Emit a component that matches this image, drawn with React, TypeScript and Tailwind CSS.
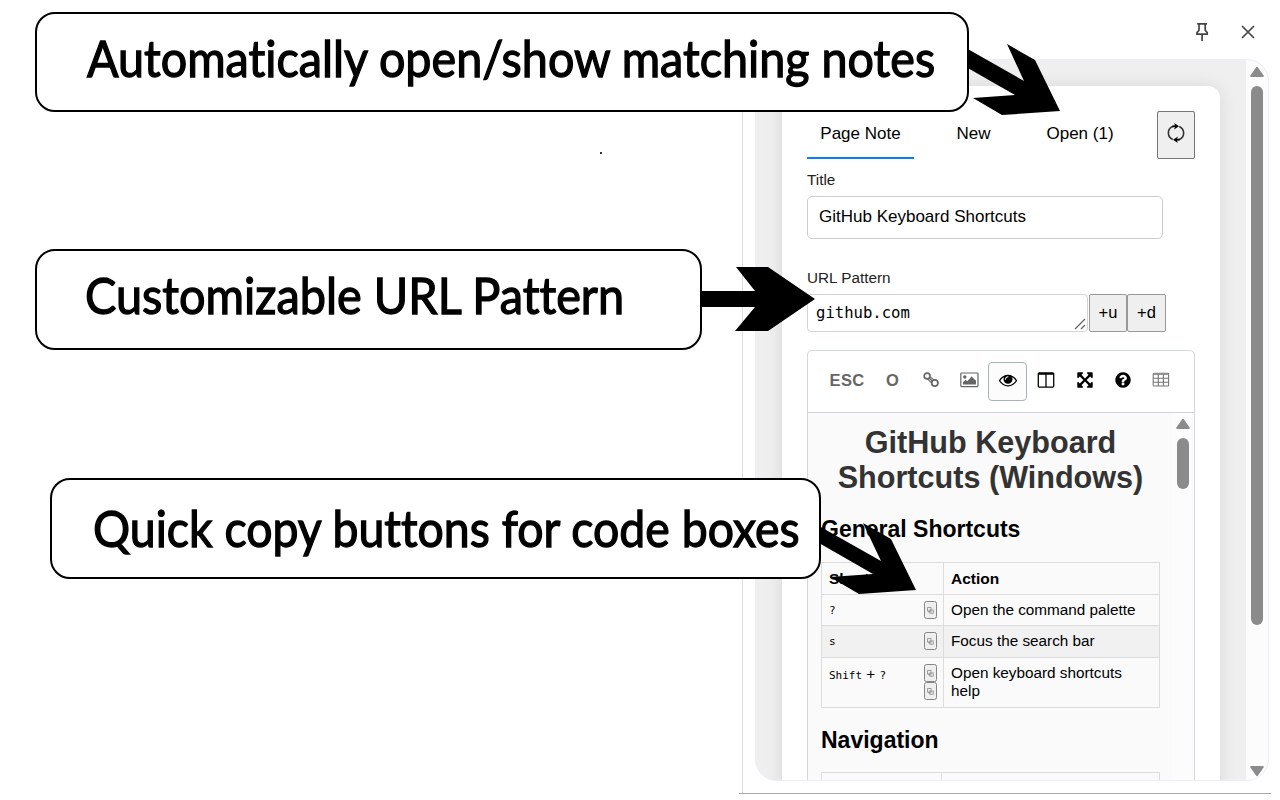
import type { ReactNode } from "react";

const EYE =
  "M1664 960q-152-236-381-353 61 104 61 225 0 185-131.5 316.5t-316.5 131.5-316.5-131.5-131.5-316.5q0-121 61-225-229 117-381 353 133 205 333.5 326.5t434.5 121.5 434.5-121.5 333.5-326.5zm-720-384q0-20-14-34t-34-14q-125 0-214.5 89.5t-89.5 214.5q0 20 14 34t34 14 34-14 14-34q0-86 61-147t147-61q20 0 34-14t14-34zm848 384q0 34-20 69-140 230-376.5 368.5t-499.5 138.5-499.5-139-376.5-368q-20-35-20-69t20-69q140-229 376.5-368t499.5-139 499.5 139 376.5 368q20 35 20 69z";
const COLUMNS =
  "M224 1536h608v-1152h-640v1120q0 13 9.5 22.5t22.5 9.5zm1376-32v-1120h-640v1152h608q13 0 22.5-9.5t9.5-22.5zm128-1216v1216q0 66-47 113t-113 47h-1344q-66 0-113-47t-47-113v-1216q0-66 47-113t113-47h1344q66 0 113 47t47 113z";
const ARROWS =
  "M1411 541l-355 355 355 355 144-144q29-31 70-14 39 17 39 59v448q0 26-19 45t-45 19h-448q-42 0-59-40-17-39 14-69l144-144-355-355-355 355 144 144q31 30 14 69-17 40-59 40h-448q-26 0-45-19t-19-45v-448q0-42 40-59 39-17 69 14l144 144 355-355-355-355-144 144q-19 19-45 19-12 0-24-5-40-17-40-59v-448q0-26 19-45t45-19h448q42 0 59 40 17 39-14 69l-144 144 355 355 355-355-144-144q-31-30-14-69 17-40 59-40h448q26 0 45 19t19 45v448q0 42-39 59-13 5-25 5-26 0-45-19z";
const QUESTION =
  "M1024 1376v-192q0-14-9-23t-23-9h-192q-14 0-23 9t-9 23v192q0 14 9 23t23 9h192q14 0 23-9t9-23zm256-672q0-88-55.5-163t-138.5-116-170-41q-243 0-371 213-15 24 8 42l132 100q7 6 19 6 16 0 25-12 53-68 86-92 34-24 86-24 48 0 85.5 26t37.5 59q0 38-20 61t-68 45q-63 28-115.5 86.5t-52.5 125.5v36q0 14 9 23t23 9h192q14 0 23-9t9-23q0-19 21.5-49.5t54.5-49.5q32-18 49-28.5t46-35 44.5-48 28-60.5 12.5-81zm384 192q0 209-103 385.5t-279.5 279.5-385.5 103-385.5-103-279.5-279.5-103-385.5 103-385.5 279.5-279.5 385.5-103 385.5 103 279.5 279.5 103 385.5z";

function Glyph({ d }: { d: string }) {
  return (
    <svg className="h-[18px] w-[18px]" viewBox="0 0 1792 1792" fill="currentColor">
      <path d={d} />
    </svg>
  );
}

function Tool({ children, active }: { children: ReactNode; active?: boolean }) {
  return (
    <span
      className={
        active
          ? "flex h-[39px] w-[39px] shrink-0 items-center justify-center rounded-[4px] border border-[#a5b4b4] bg-[#fcfcfc] pb-[3px]"
          : "flex h-[39px] w-[38.2px] shrink-0 items-center justify-center pb-[3px]"
      }
    >
      {children}
    </span>
  );
}

function CopyButton() {
  return (
    <span className="flex h-[18px] w-[13px] items-center justify-center rounded-[2.5px] border border-[#858585] bg-[#efefef]">
      <svg className="mt-px h-[7px] w-[7px]" viewBox="0 0 7 7" fill="none" stroke="#888" strokeWidth="0.8">
        <rect x="0.6" y="0.6" width="3.4" height="3.4" />
        <rect x="3" y="3" width="3.2" height="3.2" />
        <path d="M1.8 4v1.2h1.2" />
      </svg>
    </span>
  );
}

function Row({ keys, copies, action, className }: { keys: ReactNode; copies: number; action: ReactNode; className: string }) {
  return (
    <div className={`flex border-b border-[#dcdcdc] ${className}`}>
      <div className="flex w-[122px] shrink-0 justify-between border-r border-[#dcdcdc] pl-[7px] pr-[6px] pt-[6px]">
        <span className="pt-px font-['DejaVu_Sans_Mono',monospace] text-[11px] leading-[18px]">{keys}</span>
        <span className="flex flex-col">
          {Array.from({ length: copies }, (_, i) => (
            <CopyButton key={i} />
          ))}
        </span>
      </div>
      <div className="whitespace-nowrap pl-[7px] pt-[6px] text-[15.3px] leading-[18px]">{action}</div>
    </div>
  );
}

function Triangle({ down }: { down?: boolean }) {
  return (
    <svg className="h-[12px] w-[14px]" viewBox="0 0 14 12" fill="#8b8b8b" stroke="#8b8b8b" strokeWidth="2" strokeLinejoin="round">
      <path d={down ? "M1.2 2H12.8L7 10.3Z" : "M1.2 10H12.8L7 1.7Z"} />
    </svg>
  );
}

function SidePanel() {
  return (
    <div className="ml-[742px] flex h-[794px] w-[529px] flex-col bg-white">
      <div className="flex h-[59px] shrink-0 items-center pb-px pl-[452px] pt-[6px] text-[#444]">
        <svg className="h-[20px] w-[16px]" viewBox="0 0 16 20" fill="none" stroke="currentColor" strokeWidth="1.7">
          <path d="M3.2 1.9H13M5 2V8.3L3 10.6V12.2H13.2V10.6L11.2 8.3V2M8.1 12.5V19" />
        </svg>
        <svg className="ml-[30px] h-[16px] w-[16px]" viewBox="0 0 16 16" fill="none" stroke="currentColor" strokeWidth="1.7">
          <path d="M2 2L14 14M14 2L2 14" />
        </svg>
      </div>
      <div className="h-[735px] shrink-0 border-l border-[#dedee2] pl-[12px]">
        <div className="flex h-[722px] w-[514px] overflow-hidden rounded-[22px] border border-[#e9eefa] bg-[#efefef]">
          <div className="w-[490px] shrink-0 pl-[26px] pt-[26px]">
            <div className="h-[760px] w-[438px] rounded-[12px] bg-white px-[25px] pt-[26px] shadow-[0_0_18px_rgba(0,0,0,0.09)]">
              <div className="flex h-[47px] text-[17px]">
                <div className="flex w-[107px] items-center justify-center border-b-2 border-[#0a7cff] pb-[2px]">Page Note</div>
                <div className="ml-[30px] flex w-[59px] items-center justify-center pb-[4px]">New</div>
                <div className="ml-[43px] flex w-[68px] items-center justify-center whitespace-nowrap pb-[4px]">Open (1)</div>
                <div className="-mt-px ml-[43px] flex h-[48px] w-[38px] items-center justify-center rounded-[2px] border border-[#777] bg-[#efefef] pb-[5px]">
                  <svg className="h-[20px] w-[18px]" viewBox="0 0 18 20">
                    <path d="M5.2 3.6A7.6 7.2 0 0 0 5.8 16.4M12.8 16.4A7.6 7.2 0 0 0 12.2 3.6" fill="none" stroke="#333" strokeWidth="1.6" />
                    <path d="M7.2 0L12 3.2L7 6.4L8 4L5 4.4L5.2 2.6L8 2.2ZM10.8 20L6 16.8L11 13.6L10 16L13 15.6L12.8 17.4L10 17.8Z" fill="#000" />
                  </svg>
                </div>
              </div>
              <div className="mt-[11px] h-[26px] text-[15.3px] leading-[20px] text-[#222]">Title</div>
              <div className="flex h-[43px] w-[356px] items-center rounded-[5px] border border-[#ccc] pb-[1px] pl-[11px] text-[17px]">GitHub Keyboard Shortcuts</div>
              <div className="mt-[29px] h-[26px] text-[15.3px] leading-[20px] text-[#222]">URL Pattern</div>
              <div className="flex h-[38px]">
                <div className="flex h-[38px] w-[281px] items-end justify-between rounded-[4px] border border-[#d4d4d4] pl-[8px]">
                  <span className="self-center pt-px font-['DejaVu_Sans_Mono',monospace] text-[15.6px]">github.com</span>
                  <svg className="mb-px mr-px h-[12px] w-[12px]" viewBox="0 0 12 12" stroke="#666" strokeWidth="1.3">
                    <path d="M1 11L11 1M7 11L11 7" />
                  </svg>
                </div>
                <div className="ml-[1px] flex h-[38px] w-[38px] items-center justify-center rounded-[2px] border border-[#999] bg-[#efefef] pb-px text-[16.5px]">+u</div>
                <div className="flex h-[38px] w-[39px] items-center justify-center rounded-[2px] border border-[#999] bg-[#efefef] pb-px text-[16.5px]">+d</div>
              </div>
              <div className="mt-[18px] h-[460px] w-[388px] rounded-t-[5px] border border-[#d3d7de]">
                <div className="flex h-[62px] items-center border-b border-[#cdd2dc] pl-[13px]">
                  <span className="flex w-[52px] justify-center pb-[2px] text-[16.5px] font-bold tracking-[0.3px] text-[#666]">ESC</span>
                  <span className="flex w-[39px] justify-center pb-[2px] text-[16.5px] font-bold text-[#666]">O</span>
                  <Tool>
                    <svg className="h-[16px] w-[16px]" viewBox="0 0 16 16" fill="none" stroke="#666" strokeWidth="1.7">
                      <circle cx="4.1" cy="4" r="2.9" />
                      <circle cx="11.8" cy="11" r="3.1" />
                      <path d="M4.6 7.2L8.8 11.2M7.2 4.8L11.2 8.2" strokeWidth="1.1" />
                      <path d="M6 6L9.6 9.2" strokeWidth="1.3" />
                    </svg>
                  </Tool>
                  <Tool>
                    <svg className="h-[16px] w-[19px]" viewBox="0 0 19 16" fill="#666">
                      <rect x="0.8" y="1" width="17.2" height="13.6" rx="0.8" fill="none" stroke="#666" strokeWidth="1.2" />
                      <circle cx="4.8" cy="5" r="1.7" />
                      <path d="M3 12.5V10.2L5.6 7.8L7.2 9.3L11.7 4.5L16 8.8V12.5Z" />
                    </svg>
                  </Tool>
                  <Tool active><Glyph d={EYE} /></Tool>
                  <Tool><Glyph d={COLUMNS} /></Tool>
                  <Tool><Glyph d={ARROWS} /></Tool>
                  <Tool><Glyph d={QUESTION} /></Tool>
                  <Tool>
                    <svg className="h-[16px] w-[18px]" viewBox="0 0 18 16" fill="none" stroke="#777" strokeWidth="1.1">
                      <rect x="1.2" y="1.3" width="15.4" height="12.7" rx="0.8" />
                      <path d="M1.2 2.3H16.6M1.2 6.3H16.6M1.2 10.2H16.6M6.3 2V14M11.4 2V14" />
                    </svg>
                  </Tool>
                </div>
                <div className="flex h-[398px] bg-[#fafafa]">
                  <div className="w-[364px] shrink-0 pl-[13px] pt-[12px]">
                    <h1 className="w-[339px] whitespace-nowrap text-center text-[30.6px] font-bold leading-[35px] text-[#333]">
                      GitHub Keyboard
                      <br />
                      Shortcuts (Windows)
                    </h1>
                    <h2 className="mt-[20px] text-[23px] font-bold leading-[28px]">General Shortcuts</h2>
                    <div className="mt-[19px] w-[339px] border-x border-t border-[#dcdcdc]">
                      <div className="flex h-[32px] border-b border-[#dcdcdc] text-[15.5px] font-bold leading-[31px]">
                        <div className="w-[122px] border-r border-[#dcdcdc] pl-[7px]">Shortcut</div>
                        <div className="pl-[7px]">Action</div>
                      </div>
                      <Row className="h-[31px]" keys="?" copies={1} action="Open the command palette" />
                      <Row className="h-[32px] bg-[#f1f1f1]" keys="s" copies={1} action="Focus the search bar" />
                      <Row
                        className="h-[50px]"
                        keys={<>Shift<span className="font-['Liberation_Sans',sans-serif] text-[15.25px]"> + </span>?</>}
                        copies={2}
                        action={<>Open keyboard shortcuts<br />help</>}
                      />
                    </div>
                    <h2 className="mt-[18px] text-[23px] font-bold leading-[28px]">Navigation</h2>
                    <div className="mt-[18px] flex h-[30px] w-[339px] border border-[#dcdcdc]">
                      <div className="w-[120px] border-r border-[#dcdcdc]" />
                    </div>
                  </div>
                  <div className="flex w-[22px] flex-col items-center bg-[#fcfcfc] pt-[5px]">
                    <Triangle />
                    <div className="mt-[8px] h-[51px] w-[12px] rounded-full bg-[#8b8b8b]" />
                  </div>
                </div>
              </div>
            </div>
          </div>
          <div className="flex w-[22px] flex-col items-center bg-[#fcfcfc] pb-[3px] pt-[6px]">
            <Triangle />
            <div className="mt-[8px] h-[539px] w-[12px] rounded-full bg-[#8b8b8b]" />
            <div className="mt-auto flex"><Triangle down /></div>
          </div>
        </div>
      </div>
    </div>
  );
}

const callout =
  "absolute flex items-center whitespace-nowrap rounded-[20px] border-2 border-black bg-white font-['Lato',sans-serif] text-[50px] text-black [font-variant-ligatures:none] [-webkit-text-stroke:1.3px_black]";

export default function App() {
  return (
    <div className="relative h-[800px] w-[1280px] overflow-hidden bg-white font-['Liberation_Sans',Arial,sans-serif] text-black">
      <SidePanel />
      <div className="absolute left-[739px] top-[793px] h-px w-[532px] bg-[#aaa]" />
      <div className="absolute left-[600px] top-[152px] h-[2px] w-[2px] bg-[#333]" />
      <svg className="absolute left-0 top-0 h-[800px] w-[1280px]" viewBox="0 0 1280 800" fill="#000">
        <path d="M966 48L1024 81L1007 44L1035 60L1060 111L1002 115L973 98L1015 95L966 67Z" />
        <path d="M700 291H755L736 267H768L815 299L768 331H735L755 307H700Z" />
        <path d="M819 526L881 561L863 523L891 539L916 590L859 594L830 577L873 574L819 543Z" />
      </svg>
      <div className={`${callout} left-[35px] top-[12px] h-[100px] w-[934px] pl-[50px]`}>
        <span className="relative -top-[4px] origin-left scale-x-[0.934]">Automatically open/show matching notes</span>
      </div>
      <div className={`${callout} left-[35px] top-[249px] h-[101px] w-[667px] pl-[48px]`}>
        <span className="relative -top-[4px] origin-left scale-x-[0.937]">Customizable URL Pattern</span>
      </div>
      <div className={`${callout} left-[50px] top-[478px] h-[101px] w-[771px] pl-[41px]`}>
        <span className="relative origin-left scale-x-[0.928]">Quick copy buttons for code boxes</span>
      </div>
    </div>
  );
}
